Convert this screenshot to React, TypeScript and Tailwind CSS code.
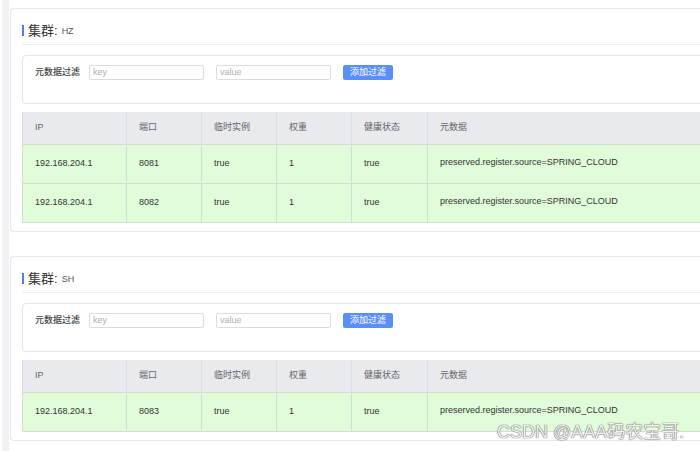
import React from 'react';

type Row = { ip: string; port: string; ephemeral: string; weight: string; healthy: string; meta: string };

const Cluster = ({ name, rows }: { name: string; rows: Row[] }) => {
    return (
        <div className="shrink-0 w-[720px] bg-white rounded border border-[#e6e8eb] pl-[11px] pr-3 pt-[15px] pb-2">
            <div className="flex items-center h-[12px]">
                <span className="w-[2px] h-[11px] bg-[#4f7cf3]"></span>
                <span className="ml-[4px] text-[13px] leading-none text-[#333]">集群:</span>
                <span className="ml-[4px] text-[9px] leading-none text-[#555] mt-[2px]">{name}</span>
            </div>
            <div className="mt-[8px] border-t border-[#eceef1]"></div>
            <div className="mt-[10px] h-[49px] border border-[#e3e5e8] rounded pt-[9px] pl-[12px]">
                <div className="flex items-center h-[15px]">
                    <span className="w-[54px] text-[9px] font-medium text-[#444]">元数据过滤</span>
                    <div className="w-[115px] h-[15px] border border-[#d9dce1] rounded-[2px] pl-[3px] text-[9px] leading-[13px] text-[#b0b0b0]">key</div>
                    <div className="ml-[12px] w-[115px] h-[15px] border border-[#d9dce1] rounded-[2px] pl-[3px] text-[9px] leading-[13px] text-[#b0b0b0]">value</div>
                    <button className="ml-[12px] w-[50px] h-[15px] rounded-[2px] bg-[#5b8ef9] text-white text-[9px] leading-[15px]">添加过滤</button>
                </div>
            </div>
            <div className="mt-[8px] border-l border-b border-[#d8dcd8] text-[9px]">
                <div className="grid grid-cols-[104px_75px_75px_75px_76px_1fr] h-[32px] bg-[#e9eaee] text-[#666]">
                    {['IP', '端口', '临时实例', '权重', '健康状态', '元数据'].map((h, i) => (
                        <div key={h} className={`flex items-center pl-[12px] ${i < 5 ? 'border-r border-[#dcdee3]' : ''}`}>{h}</div>
                    ))}
                </div>
                {rows.map((r, idx) => (
                    <div key={idx} className="grid grid-cols-[104px_75px_75px_75px_76px_1fr] h-[39px] bg-[#e1fcd9] text-[#333] border-t border-[#d5ddd3]">
                        <div className="flex items-center pl-[12px] border-r border-[#d5ddd3]">{r.ip}</div>
                        <div className="flex items-center pl-[12px] border-r border-[#d5ddd3]">{r.port}</div>
                        <div className="flex items-center pl-[12px] border-r border-[#d5ddd3]">{r.ephemeral}</div>
                        <div className="flex items-center pl-[12px] border-r border-[#d5ddd3]">{r.weight}</div>
                        <div className="flex items-center pl-[12px] border-r border-[#d5ddd3]">{r.healthy}</div>
                        <div className="pl-[12px] pt-[11px]">{r.meta}</div>
                    </div>
                ))}
            </div>
        </div>
    );
};

const meta = 'preserved.register.source=SPRING_CLOUD';

const App = () => {
    return (
        <div className="relative w-[700px] h-[451px] overflow-hidden bg-white font-['Liberation_Sans','Noto_Sans_CJK_SC',sans-serif]">
            <div className="flex h-full">
                <div className="shrink-0 ml-[2px] w-[7px] h-full bg-[#f0f2f5]"></div>
                <div className="shrink-0 ml-[1px] pt-[8px] flex flex-col gap-[24px]">
                    <Cluster
                        name="HZ"
                        rows={[
                            { ip: '192.168.204.1', port: '8081', ephemeral: 'true', weight: '1', healthy: 'true', meta },
                            { ip: '192.168.204.1', port: '8082', ephemeral: 'true', weight: '1', healthy: 'true', meta },
                        ]}
                    />
                    <Cluster
                        name="SH"
                        rows={[{ ip: '192.168.204.1', port: '8083', ephemeral: 'true', weight: '1', healthy: 'true', meta }]}
                    />
                </div>
            </div>
            {/* watermark */}
            <div className="absolute left-[497px] top-[423px] text-[18px] leading-none text-[#f2f2f2] [text-shadow:0_0_1px_#555,0_0_1px_#555] font-['Liberation_Sans','Noto_Sans_CJK_SC',sans-serif]">
                CSDN @AAA码农宝哥.
            </div>
        </div>
    );
};

export default App;
